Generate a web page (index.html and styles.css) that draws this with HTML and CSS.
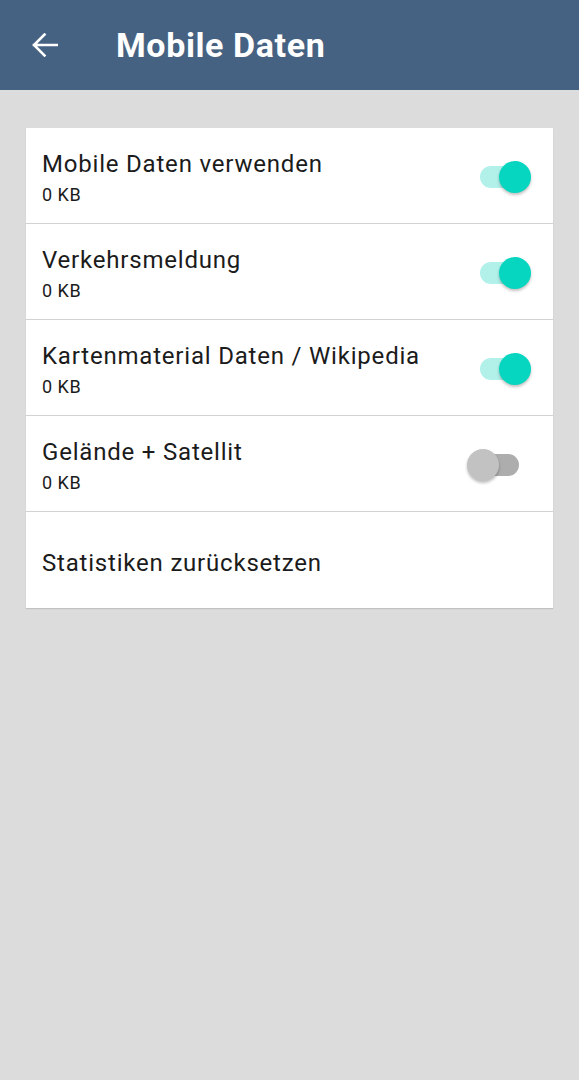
FILE: index.html
```html
<!DOCTYPE html>
<html lang="de">
<head>
    <meta charset="UTF-8">
    <meta name="viewport" content="width=device-width, initial-scale=1.0">
    <title>Mobile Daten</title>
    <link rel="stylesheet" href="styles.css">
</head>
<body>
    <header class="toolbar">
        <button class="back-btn" aria-label="Zurück">
            <svg width="26" height="24" viewBox="0 0 26 24">
                <path d="M2 12H25M12.5 1.5L2 12l10.5 10.5" fill="none" stroke="#fff" stroke-width="2.6" stroke-linecap="square"/>
            </svg>
        </button>
        <h1 class="toolbar-title">Mobile Daten</h1>
    </header>

    <main class="content">
        <div class="card">
            <div class="row">
                <div class="row-text">
                    <div class="row-title">Mobile Daten verwenden</div>
                    <div class="row-sub">0 KB</div>
                </div>
                <span class="switch on"><span class="knob"></span></span>
            </div>
            <div class="row">
                <div class="row-text">
                    <div class="row-title">Verkehrsmeldung</div>
                    <div class="row-sub">0 KB</div>
                </div>
                <span class="switch on"><span class="knob"></span></span>
            </div>
            <div class="row">
                <div class="row-text">
                    <div class="row-title">Kartenmaterial Daten / Wikipedia</div>
                    <div class="row-sub">0 KB</div>
                </div>
                <span class="switch on"><span class="knob"></span></span>
            </div>
            <div class="row">
                <div class="row-text">
                    <div class="row-title">Gelände + Satellit</div>
                    <div class="row-sub">0 KB</div>
                </div>
                <span class="switch"><span class="knob"></span></span>
            </div>
            <div class="row">
                <div class="row-text">
                    <div class="row-title">Statistiken zurücksetzen</div>
                </div>
            </div>
        </div>
    </main>
</body>
</html>
```

FILE: styles.css
```css
* {
    margin: 0;
    padding: 0;
    box-sizing: border-box;
}

body {
    font-family: Roboto, "Noto Sans", sans-serif;
    background: #dcdcdc;
    color: #1b1b1b;
    min-height: 100vh;
}

.toolbar {
    height: 90px;
    background: #466282;
    display: flex;
    align-items: center;
    padding-left: 32px;
}

.back-btn {
    background: none;
    border: none;
    width: 26px;
    height: 24px;
    display: flex;
    cursor: pointer;
}

.toolbar-title {
    margin-left: 58px;
    color: #fff;
    font-size: 34px;
    font-weight: 700;
    letter-spacing: 0.6px;
}

.content {
    padding: 38px 26px;
}

.card {
    background: #fff;
    box-shadow: 0 1px 1px rgba(0, 0, 0, 0.12);
}

.row {
    height: 96px;
    display: flex;
    align-items: center;
    padding: 4px 22px 0 16px;
    border-bottom: 1px solid #d2d2d2;
}

.row:last-child {
    border-bottom: none;
    padding-top: 6px;
}

.row-text {
    flex: 1;
}

.row-title {
    font-size: 24px;
    line-height: 30px;
    letter-spacing: 0.8px;
}

.row-sub {
    font-size: 18px;
    line-height: 24px;
    letter-spacing: 0.5px;
    margin-top: 4px;
}

.switch {
    position: relative;
    width: 39px;
    height: 22px;
    border-radius: 11px;
    background: #b1f1e9;
    margin-right: 12px;
    margin-top: -2px;
}

.switch .knob {
    position: absolute;
    top: -5px;
    right: -12px;
    width: 32px;
    height: 32px;
    border-radius: 50%;
    background: #06d6c0;
    box-shadow: 0 2px 3px rgba(0, 0, 0, 0.25);
}

.switch:not(.on) {
    background: #adadad;
}

.switch:not(.on) .knob {
    right: auto;
    left: -13px;
    background: #c2c2c2;
}
```
